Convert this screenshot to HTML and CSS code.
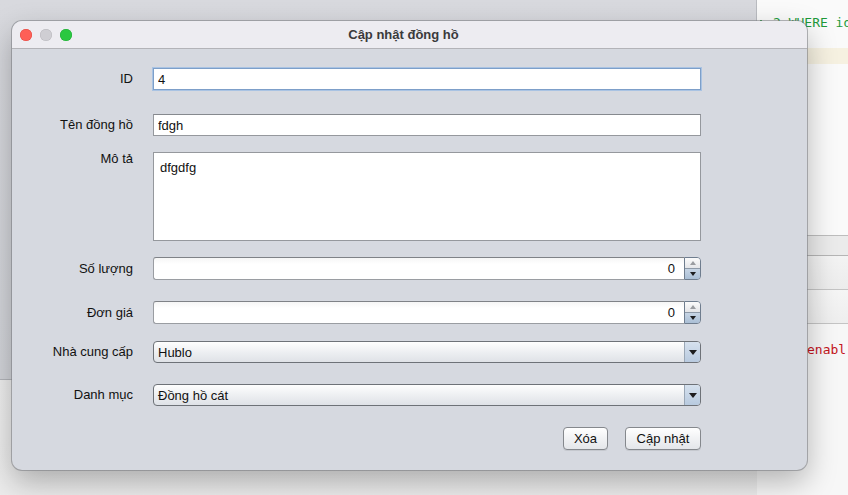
FILE: index.html
```html
<!DOCTYPE html>
<html lang="vi">
<head>
<meta charset="utf-8">
<title>Cập nhật đồng hồ</title>
<link rel="stylesheet" href="styles.css">
</head>
<body>
<div class="desktop">
  <div class="app-back"></div>
  <div class="editor">
    <div class="code-line"><span class="gutter-mark"></span>2 WHERE id=</div>
    <div class="cur-line"></div>
  </div>
  <div class="side-panel">
    <div class="sp-row sp-a"></div>
    <div class="sp-row sp-b"></div>
    <div class="sp-row sp-c"></div>
    <div class="sp-rest"><span class="err">enabl</span></div>
  </div>

  <div class="dialog">
    <div class="titlebar">
      <div class="lights">
        <span class="light red"></span>
        <span class="light grey"></span>
        <span class="light green"></span>
      </div>
      <div class="title">Cập nhật đồng hồ</div>
      <div></div>
    </div>
    <div class="form">
      <div class="row r-id">
        <label class="lbl">ID</label>
        <input class="field focus" type="text" value="4" readonly>
      </div>
      <div class="row r-name">
        <label class="lbl">Tên đồng hồ</label>
        <input class="field" type="text" value="fdgh" readonly>
      </div>
      <div class="row r-desc">
        <label class="lbl top">Mô tả</label>
        <textarea class="area" readonly>dfgdfg</textarea>
      </div>
      <div class="row r-qty">
        <label class="lbl">Số lượng</label>
        <div class="spinner">
          <input class="spin-field" type="text" value="0" readonly>
          <div class="spin-btns">
            <span class="spin-up"><i class="tri-up"></i></span>
            <span class="spin-down"><i class="tri-down"></i></span>
          </div>
        </div>
      </div>
      <div class="row r-price">
        <label class="lbl">Đơn giá</label>
        <div class="spinner">
          <input class="spin-field" type="text" value="0" readonly>
          <div class="spin-btns">
            <span class="spin-up"><i class="tri-up"></i></span>
            <span class="spin-down"><i class="tri-down"></i></span>
          </div>
        </div>
      </div>
      <div class="row r-sup">
        <label class="lbl">Nhà cung cấp</label>
        <div class="combo">
          <span class="combo-text">Hublo</span>
          <span class="combo-arrow"><i class="tri-down"></i></span>
        </div>
      </div>
      <div class="row r-cat">
        <label class="lbl">Danh mục</label>
        <div class="combo">
          <span class="combo-text">Đồng hồ cát</span>
          <span class="combo-arrow"><i class="tri-down"></i></span>
        </div>
      </div>
      <div class="actions">
        <button class="btn btn-del" type="button">Xóa</button>
        <button class="btn btn-upd" type="button">Cập nhật</button>
      </div>
    </div>
  </div>
</div>
</body>
</html>
```

FILE: styles.css
```css
* { box-sizing: border-box; }

html, body {
  margin: 0;
  padding: 0;
}

body {
  font-family: "Liberation Sans", Arial, sans-serif;
  font-size: 13px;
  color: #111;
  background: #f1f1f1;
}

.desktop {
  position: relative;
  width: 848px;
  height: 495px;
  overflow: hidden;
  background: linear-gradient(#f4f4f4, #ececec);
}

/* background application windows */
.app-back {
  position: absolute;
  left: 0;
  top: 0;
  width: 757px;
  height: 380px;
  background: linear-gradient(#d8d9de, #d2d4d9);
  border-right: 1px solid #b9bbc0;
  border-bottom: 1px solid #b3b5ba;
}

.editor {
  position: absolute;
  left: 757px;
  top: 0;
  width: 91px;
  height: 235px;
  background: #fafafa;
  overflow: hidden;
}

.code-line {
  position: absolute;
  left: 3px;
  top: 15px;
  display: flex;
  align-items: center;
  font-family: "DejaVu Sans Mono", "Liberation Mono", monospace;
  font-size: 13px;
  line-height: 15px;
  color: #1f9a3a;
  white-space: pre;
}

.gutter-mark {
  display: block;
  width: 2px;
  height: 9px;
  margin: 4px 11px 0 0;
  background: #1f9a3a;
}

.cur-line {
  position: absolute;
  left: 0;
  top: 48px;
  width: 91px;
  height: 16px;
  background: #f6f1e1;
}

.side-panel {
  position: absolute;
  left: 757px;
  top: 235px;
  width: 91px;
  height: 260px;
  display: flex;
  flex-direction: column;
  border-top: 1px solid #bdbdbd;
}

.sp-row { border-bottom: 1px solid #c4c4c4; }
.sp-a { height: 20px; background: #ebebeb; border-bottom-color: #b5b5b5; }
.sp-b { height: 34px; background: linear-gradient(#f3f3f3, #ececec); }
.sp-c { height: 34px; background: linear-gradient(#f5f5f5, #eeeeee); }

.sp-rest {
  flex: 1;
  background: #f7f7f7;
  padding: 18px 0 0 50px;
  font-family: "DejaVu Sans Mono", "Liberation Mono", monospace;
  font-size: 13px;
  color: #c4161c;
  white-space: nowrap;
}

/* dialog */
.dialog {
  position: absolute;
  left: 12px;
  top: 21px;
  width: 795px;
  height: 449px;
  border-radius: 10px;
  background: #d6d9e0;
  box-shadow: 0 0 0 1px rgba(120, 122, 128, 0.55), 0 12px 30px rgba(0, 0, 0, 0.28);
  overflow: hidden;
}

.titlebar {
  height: 28px;
  display: grid;
  grid-template-columns: 1fr auto 1fr;
  align-items: center;
  background: #edecf1;
  border-bottom: 1px solid #b3b3b8;
}

.lights {
  display: flex;
  gap: 8px;
  padding-left: 8px;
}

.light {
  width: 12px;
  height: 12px;
  border-radius: 50%;
  display: block;
}

.red { background: #fe5f57; box-shadow: inset 0 0 0 0.5px #e1463f; }
.grey { background: #cfced3; box-shadow: inset 0 0 0 0.5px #b8b7bc; }
.green { background: #2ac840; box-shadow: inset 0 0 0 0.5px #1eaa33; }

.title {
  font-weight: bold;
  font-size: 13px;
  color: #3a3a3c;
  margin-right: 12px;
}

.form {
  display: flex;
  flex-direction: column;
}

.row {
  display: grid;
  grid-template-columns: 121px 548px;
  column-gap: 20px;
  align-items: center;
}

.r-id { margin-top: 19px; height: 22px; }
.r-name { margin-top: 24px; height: 22px; }
.r-desc { margin-top: 16px; height: 89px; align-items: start; }
.r-qty { margin-top: 16px; height: 23px; }
.r-price { margin-top: 21px; height: 23px; }
.r-sup { margin-top: 17px; height: 22px; }
.r-cat { margin-top: 21px; height: 22px; }

.lbl {
  text-align: right;
  font-size: 13px;
  line-height: 16px;
  color: #111;
}

.lbl.top { margin-top: 0; line-height: 14px; }

.field {
  -webkit-appearance: none;
  appearance: none;
  height: 22px;
  width: 100%;
  margin: 0;
  padding: 0 4px;
  font: 13px "Liberation Sans", Arial, sans-serif;
  color: #111;
  background: #fff;
  border: 1px solid #95989d;
  border-top-color: #86898e;
  border-radius: 0;
  outline: none;
}

.field.focus {
  border-color: #7d9fc9;
  box-shadow: 0 0 0 1px #a9c3e3;
}

.area {
  -webkit-appearance: none;
  appearance: none;
  display: block;
  width: 100%;
  height: 89px;
  margin: 0;
  padding: 7px 6px;
  font: 13px/16px "Liberation Sans", Arial, sans-serif;
  color: #111;
  background: #fff;
  border: 1px solid #95989d;
  resize: none;
  outline: none;
}

/* spinner */
.spinner {
  display: flex;
  height: 23px;
}

.spin-field {
  -webkit-appearance: none;
  appearance: none;
  flex: 1;
  min-width: 0;
  height: 23px;
  margin: 0;
  padding: 0 9px 0 4px;
  text-align: right;
  font: 13px "Liberation Sans", Arial, sans-serif;
  color: #111;
  background: linear-gradient(#f6f6f6, #fff 30%);
  border: 1px solid #9a9da2;
  border-top-color: #7f8287;
  border-right: none;
  border-radius: 3px 0 0 3px;
  outline: none;
}

.spin-btns {
  width: 17px;
  display: flex;
  flex-direction: column;
  border: 1px solid #6f7d8e;
  border-radius: 0 4px 4px 0;
  overflow: hidden;
}

.spin-up, .spin-down {
  flex: 1;
  display: flex;
  align-items: center;
  justify-content: center;
}

.spin-up {
  background: linear-gradient(#fbfbfb, #e4e5e8);
  border-bottom: 1px solid #8e9aa8;
}

.spin-down {
  background: linear-gradient(#c7d5e5, #aabfd6);
}

.tri-up, .tri-down {
  display: block;
  width: 0;
  height: 0;
  border-left: 3.5px solid transparent;
  border-right: 3.5px solid transparent;
}

.tri-up { border-bottom: 4px solid #9a9ca0; }
.tri-down { border-top: 4px solid #1d1d1f; }

/* combo */
.combo {
  height: 22px;
  display: flex;
  align-items: stretch;
  border: 1px solid #6e7278;
  border-radius: 4px;
  overflow: hidden;
  background: linear-gradient(#fefefe, #eceef1 55%, #dfe2e7);
}

.combo-text {
  flex: 1;
  display: flex;
  align-items: center;
  padding-left: 4px;
  font-size: 13px;
  color: #111;
}

.combo-arrow {
  width: 16px;
  display: flex;
  align-items: center;
  justify-content: center;
  border-left: 1px solid #9aa7b6;
  background: linear-gradient(#d6e1ee, #b8cadf);
}

.combo-arrow .tri-down {
  border-left-width: 4px;
  border-right-width: 4px;
  border-top-width: 5px;
}

/* buttons */
.actions {
  display: flex;
  justify-content: flex-end;
  gap: 17px;
  margin-top: 21px;
  width: 689px;
}

.btn {
  -webkit-appearance: none;
  appearance: none;
  height: 23px;
  margin: 0;
  padding: 0;
  font: 13px "Liberation Sans", Arial, sans-serif;
  color: #111;
  background: linear-gradient(#ffffff, #f1f2f4 50%, #e4e6ea);
  border: 1px solid #85888d;
  border-radius: 4px;
  box-shadow: 0 1px 0 rgba(0, 0, 0, 0.08);
}

.btn-del { width: 45px; }
.btn-upd { width: 76px; }
```
